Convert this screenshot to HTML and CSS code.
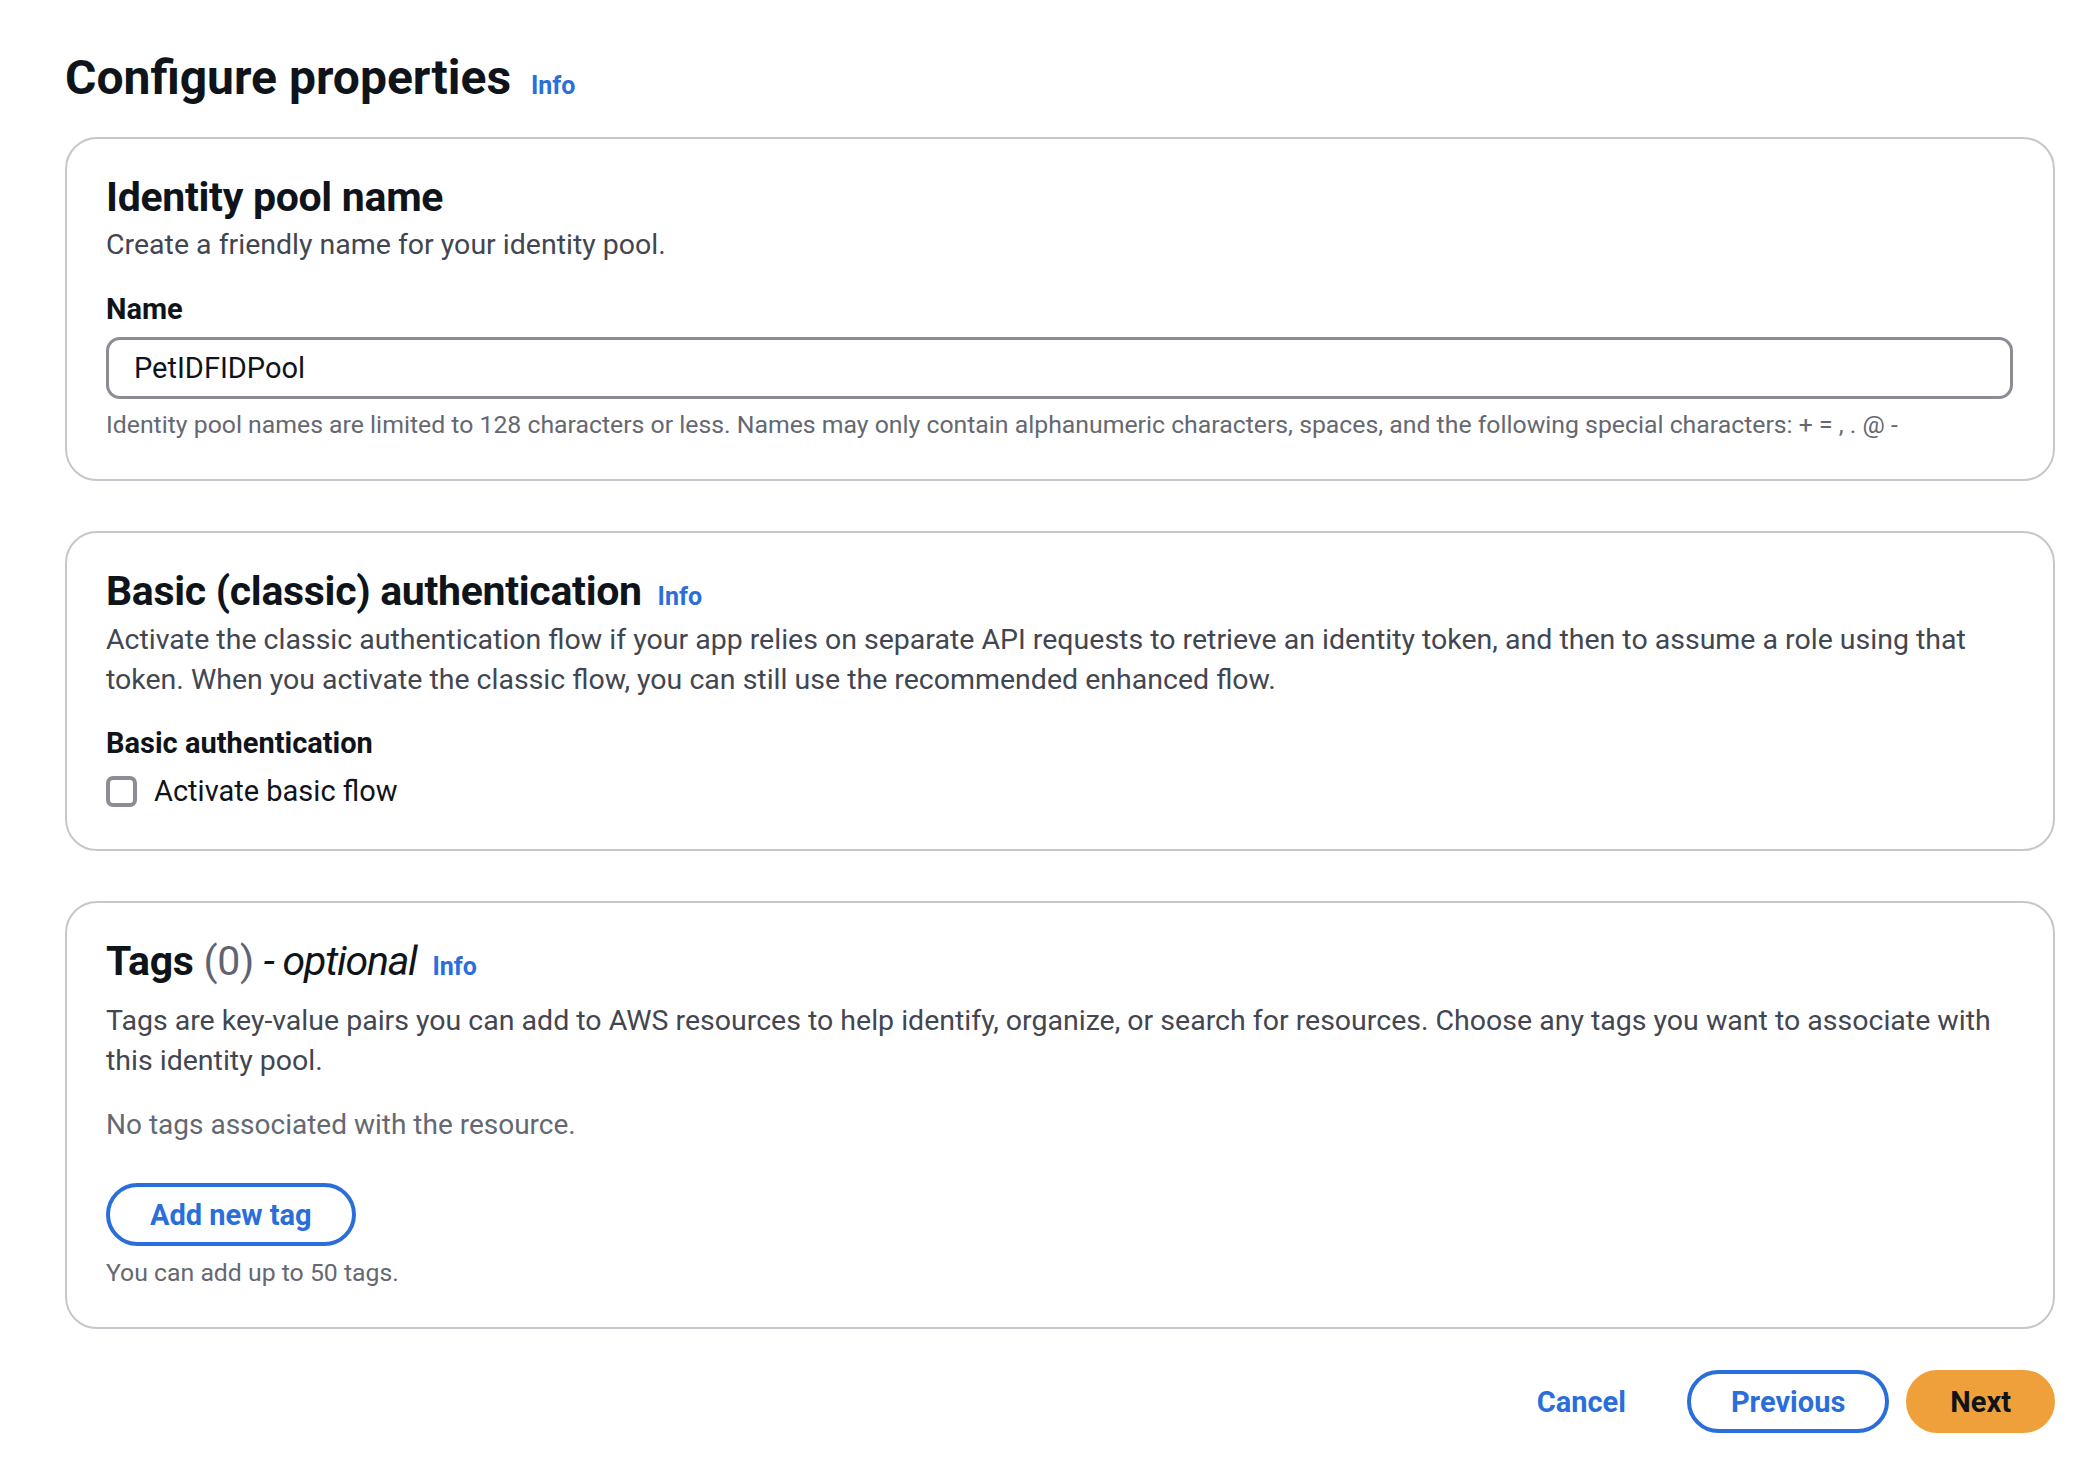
FILE: index.html
```html
<!DOCTYPE html>
<html lang="en">
<head>
<meta charset="utf-8">
<title>Configure properties</title>
<link rel="stylesheet" href="styles.css">
</head>
<body>
<main class="page">
  <h1 class="page-title">Configure properties <a class="info" href="#">Info</a></h1>

  <section class="card">
    <h2 class="card-title">Identity pool name</h2>
    <p class="card-desc">Create a friendly name for your identity pool.</p>
    <label class="field-label" for="pool-name">Name</label>
    <input class="text-input" id="pool-name" type="text" value="PetIDFIDPool">
    <p class="hint hint-field">Identity pool names are limited to 128 characters or less. Names may only contain alphanumeric characters, spaces, and the following special characters: + = , . @ -</p>
  </section>

  <section class="card">
    <h2 class="card-title">Basic (classic) authentication <a class="info" href="#">Info</a></h2>
    <p class="card-desc desc-basic">Activate the classic authentication flow if your app relies on separate API requests to retrieve an identity token, and then to assume a role using that token. When you activate the classic flow, you can still use the recommended enhanced flow.</p>
    <div class="field-label label-basic">Basic authentication</div>
    <label class="checkbox-row">
      <span class="checkbox"></span>
      <span class="checkbox-label">Activate basic flow</span>
    </label>
  </section>

  <section class="card">
    <h2 class="card-title">Tags <span class="counter">(0)</span> <span class="optional">- optional</span> <a class="info" href="#">Info</a></h2>
    <p class="card-desc desc-tags">Tags are key-value pairs you can add to AWS resources to help identify, organize, or search for resources. Choose any tags you want to associate with this identity pool.</p>
    <p class="empty">No tags associated with the resource.</p>
    <button class="btn btn-normal btn-add" type="button">Add new tag</button>
    <p class="hint hint-tags">You can add up to 50 tags.</p>
  </section>

  <div class="actions">
    <button class="btn btn-link" type="button">Cancel</button>
    <button class="btn btn-normal" type="button">Previous</button>
    <button class="btn btn-primary" type="button">Next</button>
  </div>
</main>
</body>
</html>
```

FILE: styles.css
```css
* { box-sizing: border-box; }

html, body {
  margin: 0;
  padding: 0;
  background: #ffffff;
}

body {
  font-family: Roboto, "Liberation Sans", sans-serif;
  color: #0f141a;
}

.page {
  padding: 48px 31px 0 65px;
}

.page-title {
  margin: 0;
  font-size: 48px;
  line-height: 60px;
  font-weight: 700;
  color: #0f141a;
}

.info {
  font-size: 25px;
  line-height: 1;
  font-weight: 700;
  color: #2a6edb;
  text-decoration: none;
  margin-left: 8px;
}

.card {
  border: 2px solid #c6c6cd;
  border-radius: 32px;
  padding: 34px 40px 38px 39px;
  margin-top: 29px;
}

.card + .card {
  margin-top: 50px;
}

.card-title {
  margin: 0;
  font-size: 41px;
  line-height: 48px;
  font-weight: 700;
  letter-spacing: -0.3px;
  color: #0f141a;
}

.card-title .info {
  margin-left: 6px;
  letter-spacing: 0;
}

.counter {
  font-weight: 400;
  color: #5f6470;
}

.optional {
  font-weight: 400;
  font-style: italic;
  letter-spacing: -1.2px;
  color: #0f141a;
}

.card-desc {
  margin: 4px 0 0;
  font-size: 28.5px;
  line-height: 40px;
  color: #424650;
}

.desc-basic { margin-top: 5px; }
.desc-tags { margin-top: 16px; }

.field-label {
  display: block;
  margin-top: 24px;
  font-size: 29px;
  line-height: 40px;
  font-weight: 700;
  color: #0f141a;
}

.label-basic { margin-top: 23px; }

.text-input {
  display: block;
  width: 100%;
  height: 62px;
  margin-top: 8px;
  padding: 0 25px;
  border: 3px solid #8c8c94;
  border-radius: 14px;
  font-family: inherit;
  font-size: 29px;
  color: #0f141a;
  background: #fff;
  outline: none;
}

.hint {
  margin: 0;
  font-size: 24.8px;
  line-height: 32px;
  color: #656871;
}

.hint-field { margin-top: 10px; }
.hint-tags { margin-top: 11px; }

.checkbox-row {
  display: flex;
  align-items: center;
  gap: 17px;
  height: 40px;
  margin-top: 8px;
}

.checkbox {
  width: 31px;
  height: 31px;
  border: 4px solid #8c8c94;
  border-radius: 7px;
  background: #fff;
}

.checkbox-label {
  font-size: 29px;
  line-height: 40px;
  color: #0f141a;
}

.empty {
  margin: 24px 0 0;
  font-size: 28px;
  line-height: 40px;
  color: #656871;
}

.btn {
  height: 63px;
  padding: 0 40px;
  border: 4px solid transparent;
  border-radius: 32px;
  font-family: inherit;
  font-size: 29px;
  font-weight: 700;
  background: #fff;
  cursor: pointer;
}

.btn-normal {
  border-color: #2a6edb;
  color: #2a6edb;
}

.btn-add {
  display: block;
  margin-top: 38px;
}

.btn-link {
  color: #2a6edb;
  background: transparent;
  padding: 0 40px;
}

.btn-primary {
  background: #f0a03a;
  border-color: #f0a03a;
  color: #0f141a;
}

.actions {
  display: flex;
  justify-content: flex-end;
  align-items: center;
  gap: 17px;
  margin-top: 41px;
}
```
